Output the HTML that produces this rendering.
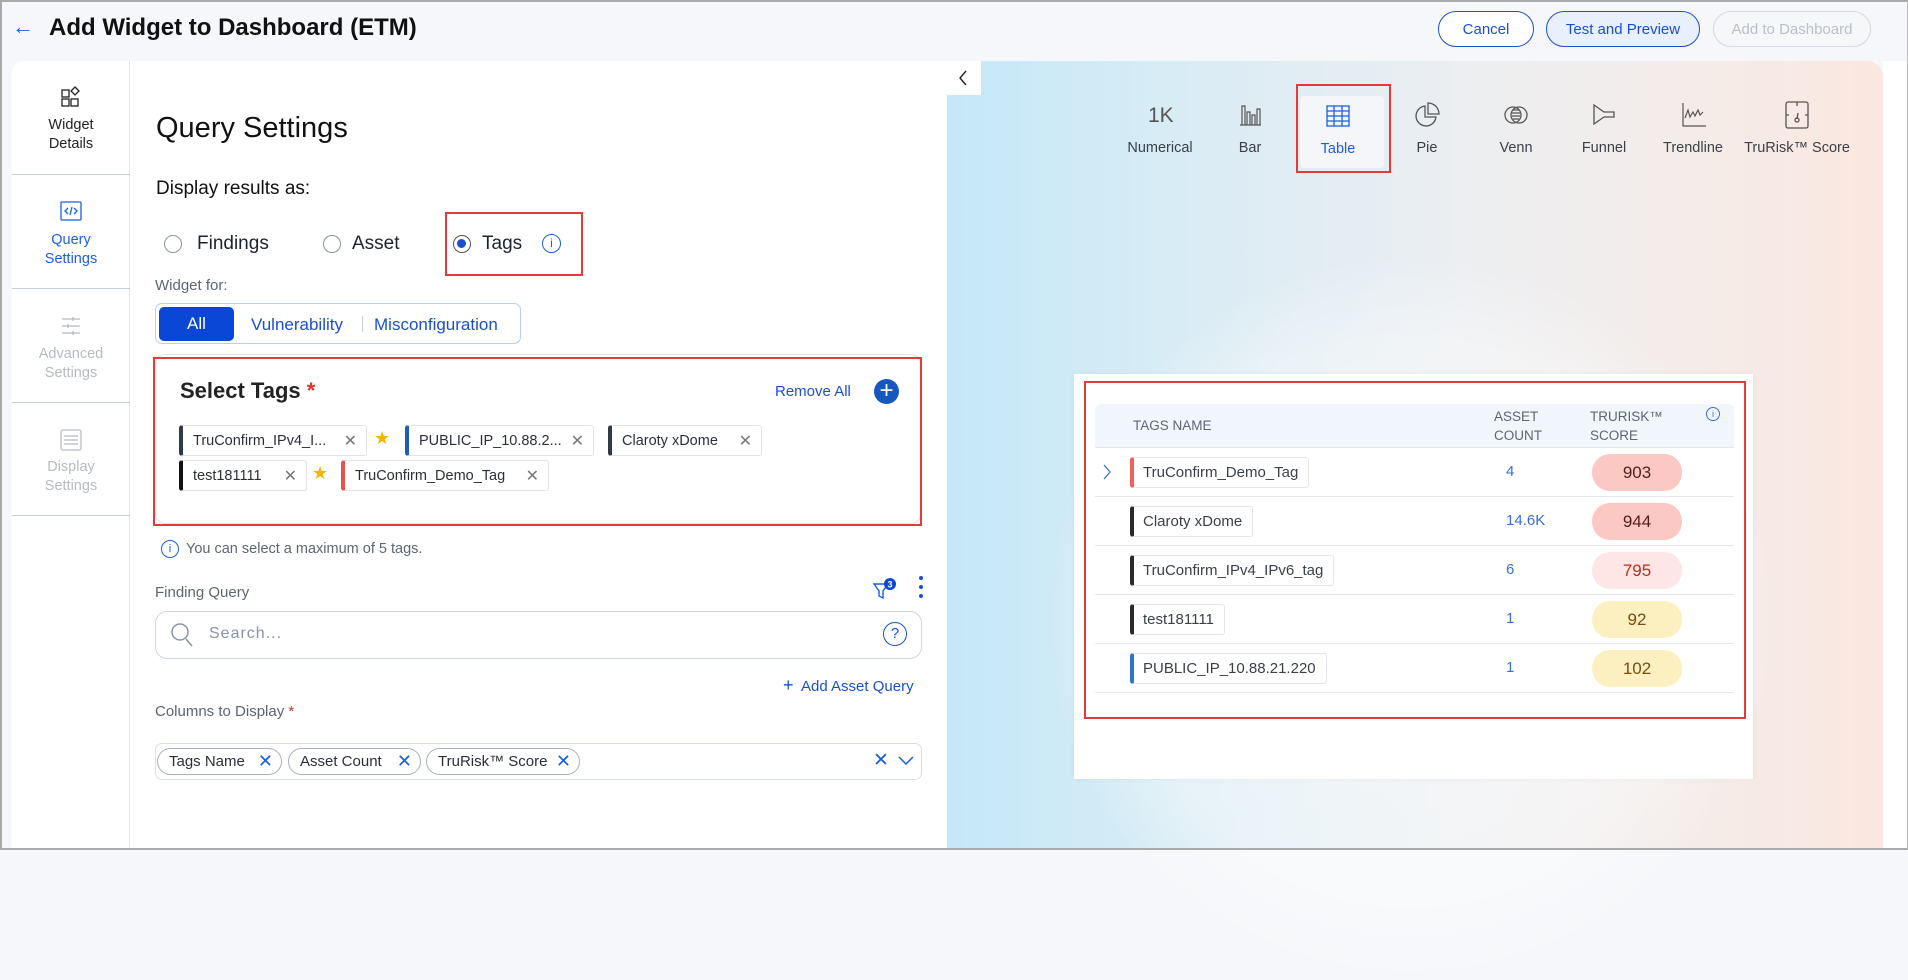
<!DOCTYPE html>
<html><head><meta charset="utf-8">
<style>
*{box-sizing:border-box;margin:0;padding:0}
body{width:1908px;height:850px;overflow:hidden;font-family:"Liberation Sans",sans-serif;background:#f5f7fa;position:relative;color:#1d2330}
.a{position:absolute}
.frame{position:absolute;left:0;top:0;width:1908px;height:850px;border:2px solid #a9a9a9;border-right:1px solid #bbb;border-bottom:2px solid #a9a9a9;pointer-events:none;z-index:9}
.btn{position:absolute;top:11px;height:36px;border-radius:18px;font-size:15px;display:flex;align-items:center;justify-content:center}
.side{position:absolute;left:12px;top:61px;width:118px;height:789px;background:#fff;border-right:1px solid #e1e4ea;border-top-left-radius:12px}
.si{position:absolute;left:0;width:118px;text-align:center;font-size:14.5px;line-height:19px}
.sd{position:absolute;left:0;width:118px;height:1px;background:#c8ced8}
.main{position:absolute;left:130px;top:61px;width:817px;height:789px;background:#fff}
.radio{position:absolute;width:18px;height:18px;border:1.5px solid #8a93a3;border-radius:50%}
.chip{position:absolute;height:31px;border:1px solid #e0e3e8;border-radius:3px;border-left:4px solid #333;font-size:14.5px;display:flex;align-items:center;padding-left:10px;color:#2b2f38;background:#fff}
.chip .x{position:absolute;right:9px;top:5px;color:#777;font-size:16px}
.star{position:absolute;color:#f5b400;font-size:18px}
.cc{position:absolute;top:748px;height:27px;border:1px solid #a7afbd;border-radius:14px;font-size:15px;display:flex;align-items:center;padding-left:11px;color:#2b2f38}
.cc b{font-weight:normal;color:#1b5fe0;font-size:18px;position:absolute;right:8px;top:2px}
.ct{position:absolute;text-align:center;font-size:14.5px;color:#3a3f48;width:100px}
.tr{position:absolute;left:1095px;width:639px;height:49px;border-bottom:1px solid #e4e7ec}
.tc{position:absolute;left:35px;top:9px;height:31px;border:1px solid #e2e5ea;border-left:4px solid #2a2a2a;border-radius:3px;padding:0 10px 0 9px;font-size:15px;line-height:29px;color:#3a3f48;background:#fff}
.cnt{position:absolute;left:411px;top:15px;color:#3b6fd8;font-size:15px}
.sc{position:absolute;left:497px;top:6px;width:90px;height:37px;border-radius:18px;text-align:center;line-height:37px;font-size:17px}
</style></head><body>
<div class="frame"></div>
<div class="a" style="left:12px;top:14px;font-size:22px;color:#1b5fe0">&#8592;</div>
<div class="a" style="left:49px;top:14px;font-size:24px;font-weight:bold;color:#111">Add Widget to Dashboard (ETM)</div>
<div class="btn" style="left:1438px;width:96px;border:1.5px solid #1b4fd0;color:#1b4fd0;background:#fff">Cancel</div>
<div class="btn" style="left:1546px;width:154px;border:1.5px solid #1b4fd0;color:#1b4fd0;background:#e8f0fd">Test and Preview</div>
<div class="btn" style="left:1713px;width:158px;border:1px solid #d5d9e0;color:#b9bec8;background:#f6f7f9">Add to Dashboard</div>

<div class="side">
 <svg class="a" style="left:47px;top:24px" width="24" height="24" viewBox="0 0 24 24" fill="none" stroke="#222" stroke-width="1.3"><rect x="3" y="5" width="7" height="7"/><rect x="3" y="14" width="7" height="7"/><rect x="12" y="14" width="7" height="7"/><path d="M16 2l4 4-4 4-4-4z"/></svg>
 <div class="si" style="top:55px;color:#222">Widget<br>Details</div>
 <div class="sd" style="top:113px"></div>
 <svg class="a" style="left:47px;top:139px" width="24" height="22" viewBox="0 0 24 22" fill="none" stroke="#1b5fe0" stroke-width="1.3"><rect x="2" y="2" width="20" height="18" rx="1"/><path d="M9 8l-3 3 3 3M15 8l3 3-3 3M13 7l-2 8"/></svg>
 <div class="si" style="top:170px;color:#1b5fe0">Query<br>Settings</div>
 <div class="sd" style="top:227px"></div>
 <svg class="a" style="left:47px;top:254px" width="24" height="22" viewBox="0 0 24 22" fill="none" stroke="#b5bac4" stroke-width="1.3"><path d="M3 4h18M3 11h18M3 18h18"/><path d="M14 2v4M9 9v4M14 16v4"/></svg>
 <div class="si" style="top:284px;color:#b5bac4">Advanced<br>Settings</div>
 <div class="sd" style="top:341px"></div>
 <svg class="a" style="left:47px;top:367px" width="24" height="24" viewBox="0 0 24 24" fill="none" stroke="#b5bac4" stroke-width="1.3"><rect x="2" y="2" width="20" height="20" rx="2"/><path d="M5 8h14M5 12h14M5 16h14"/></svg>
 <div class="si" style="top:397px;color:#b5bac4">Display<br>Settings</div>
 <div class="sd" style="top:454px"></div>
</div>

<div class="main"></div>
<div class="a" style="left:156px;top:112px;font-size:29px;color:#111">Query Settings</div>
<div class="a" style="left:156px;top:178px;font-size:19px;color:#111">Display results as:</div>
<div class="radio" style="left:164px;top:235px"></div>
<div class="a" style="left:197px;top:233px;font-size:19px">Findings</div>
<div class="radio" style="left:323px;top:235px"></div>
<div class="a" style="left:352px;top:233px;font-size:19px">Asset</div>
<div class="radio" style="left:453px;top:235px;border-color:#555"><div class="a" style="left:3px;top:3px;width:9px;height:9px;border-radius:50%;background:#1b4fd0"></div></div>
<div class="a" style="left:482px;top:233px;font-size:19px">Tags</div>
<div class="a" style="left:542px;top:234px;width:19px;height:19px;border:1.3px solid #1b5fe0;border-radius:50%;color:#1b5fe0;font-size:12px;text-align:center;line-height:17px">i</div>
<div class="a" style="left:445px;top:212px;width:138px;height:64px;border:2px solid #e53a3a"></div>
<div class="a" style="left:155px;top:277px;font-size:15px;color:#5d6574">Widget for:</div>
<div class="a" style="left:155px;top:303px;width:366px;height:41px;border:1px solid #b9cdf0;border-radius:7px"></div>
<div class="a" style="left:159px;top:307px;width:75px;height:34px;background:#0a47d6;border-radius:5px;color:#fff;font-size:17px;text-align:center;line-height:34px">All</div>
<div class="a" style="left:251px;top:315px;font-size:17px;color:#1b4fd0">Vulnerability</div>
<div class="a" style="left:362px;top:316px;width:1px;height:16px;background:#c5cbd6"></div>
<div class="a" style="left:374px;top:315px;font-size:17px;color:#1b4fd0">Misconfiguration</div>

<div class="a" style="left:155px;top:354px;width:766px;height:170px;border:1px solid #dfe3ea;border-radius:10px"></div>
<div class="a" style="left:153px;top:357px;width:769px;height:169px;border:2px solid #e53a3a"></div>
<div class="a" style="left:180px;top:378px;font-size:22px;font-weight:bold;color:#222">Select Tags <span style="color:#e0302a">*</span></div>
<div class="a" style="left:775px;top:383px;font-size:15px;color:#1b4fd0">Remove All</div>
<div class="a" style="left:874px;top:379px;width:25px;height:25px;border-radius:50%;background:#1558c0;color:#fff;font-size:24px;text-align:center;line-height:24px">+</div>
<div class="chip" style="left:179px;top:425px;width:188px;border-left-color:#2f3a45">TruConfirm_IPv4_I...<span class="x">✕</span></div>
<div class="star" style="left:374px;top:428px">★</div>
<div class="chip" style="left:405px;top:425px;width:189px;border-left-color:#1b5fb0">PUBLIC_IP_10.88.2...<span class="x">✕</span></div>
<div class="chip" style="left:608px;top:425px;width:154px;border-left-color:#2f3a45">Claroty xDome<span class="x">✕</span></div>
<div class="chip" style="left:179px;top:460px;width:128px;border-left-color:#111">test181111<span class="x">✕</span></div>
<div class="star" style="left:312px;top:463px">★</div>
<div class="chip" style="left:341px;top:460px;width:208px;border-left-color:#e85050">TruConfirm_Demo_Tag<span class="x">✕</span></div>

<div class="a" style="left:161px;top:540px;width:18px;height:18px;border:1.3px solid #1b5fe0;border-radius:50%;color:#1b5fe0;font-size:11px;text-align:center;line-height:16px">i</div>
<div class="a" style="left:186px;top:541px;font-size:14.5px;color:#5d6574">You can select a maximum of 5 tags.</div>
<div class="a" style="left:155px;top:584px;font-size:15px;color:#5d6574">Finding Query</div>
<svg class="a" style="left:872px;top:578px" width="26" height="24" viewBox="0 0 26 24"><path d="M2 6h14l-5 7v7l-4-2v-5z" fill="none" stroke="#1b5fe0" stroke-width="1.4"/><circle cx="18" cy="6" r="6" fill="#0a47d6"/><text x="18" y="9.5" font-size="9" fill="#fff" text-anchor="middle" font-family="Liberation Sans" font-weight="bold">3</text></svg>
<div class="a" style="left:919px;top:576px;width:4px;height:4px;border-radius:50%;background:#1b4fd0;box-shadow:0 9px 0 #1b4fd0,0 18px 0 #1b4fd0"></div>
<div class="a" style="left:155px;top:611px;width:767px;height:48px;border:1px solid #cfd5df;border-radius:12px"></div>
<svg class="a" style="left:170px;top:622px" width="24" height="26" viewBox="0 0 24 26" fill="none" stroke="#8a93a3" stroke-width="1.5"><circle cx="10" cy="10" r="8"/><path d="M16 17l6 7"/></svg>
<div class="a" style="left:209px;top:625px;font-size:16px;color:#8a93a3;letter-spacing:1px">Search...</div>
<div class="a" style="left:883px;top:622px;width:24px;height:24px;border:1.5px solid #1b4fd0;border-radius:50%;color:#1b4fd0;font-size:15px;text-align:center;line-height:21px">?</div>
<div class="a" style="left:783px;top:675px;font-size:15px;color:#1b4fd0"><span style="font-size:18px">+</span>&nbsp; Add Asset Query</div>
<div class="a" style="left:155px;top:703px;font-size:15px;color:#5d6574">Columns to Display <span style="color:#e0302a">*</span></div>
<div class="a" style="left:155px;top:743px;width:767px;height:37px;border:1px solid #d8def0;border-radius:7px"></div>
<div class="cc" style="left:157px;width:125px">Tags Name<b>✕</b></div>
<div class="cc" style="left:288px;width:133px">Asset Count<b>✕</b></div>
<div class="cc" style="left:426px;width:154px">TruRisk™ Score<b>✕</b></div>
<div class="a" style="left:873px;top:749px;font-size:19px;color:#1b5fe0">✕</div>
<svg class="a" style="left:897px;top:755px" width="18" height="12" viewBox="0 0 18 12"><path d="M2 2l7 7 7-7" fill="none" stroke="#1b5fe0" stroke-width="1.5"/></svg>

<div class="a" style="left:947px;top:61px;width:936px;height:789px;border-top-right-radius:16px;background:linear-gradient(90deg,#c4e8f8 0%,#d9ecf5 25%,#eceef1 55%,#f4ece9 80%,#fbe7df 100%)"></div>
<div class="a" style="left:1050px;top:260px;width:720px;height:720px;border-radius:50%;background:radial-gradient(circle,rgba(255,255,255,.55) 0%,rgba(255,255,255,.35) 55%,rgba(255,255,255,0) 72%)"></div>
<div class="a" style="left:1883px;top:61px;width:25px;height:789px;background:#fff"></div>
<div class="a" style="left:947px;top:61px;width:34px;height:34px;background:#fff"></div>
<svg class="a" style="left:957px;top:69px" width="12" height="18" viewBox="0 0 12 18"><path d="M9 2L3 9l6 7" fill="none" stroke="#222" stroke-width="1.4"/></svg>

<div class="a" style="left:1300px;top:96px;width:84px;height:72px;background:#f4f6fa;border-radius:4px"></div>
<div class="a" style="left:1296px;top:84px;width:95px;height:89px;border:2px solid #e53a3a"></div>
<div class="a" style="left:1148px;top:104px;font-size:21px;color:#555">1K</div>
<svg class="a" style="left:1238px;top:103px" width="24" height="24" viewBox="0 0 24 24" fill="none" stroke="#555" stroke-width="1.2"><path d="M2 22h21M4 22V3h3v19M9 22V9h3v13M14 22V12h3v10M19 22V6h3v16"/></svg>
<svg class="a" style="left:1326px;top:105px" width="24" height="22" viewBox="0 0 24 22" fill="none" stroke="#1b5fe0" stroke-width="1.3"><rect x="1" y="1" width="22" height="20"/><path d="M1 6h22M1 11h22M1 16h22M8 1v20M16 1v20"/></svg>
<svg class="a" style="left:1414px;top:102px" width="26" height="26" viewBox="0 0 26 26" fill="none" stroke="#555" stroke-width="1.3"><path d="M11 4a10 10 0 1 0 11 11H11z"/><path d="M14 1v11h11A11 11 0 0 0 14 1z"/></svg>
<svg class="a" style="left:1503px;top:104px" width="26" height="22" viewBox="0 0 26 22" fill="none" stroke="#555" stroke-width="1.3"><circle cx="10" cy="11" r="8"/><circle cx="16" cy="11" r="8"/><path d="M10 6h6M9 9h8M9 12h8M10 15h6"/></svg>
<svg class="a" style="left:1592px;top:103px" width="24" height="24" viewBox="0 0 24 24" fill="none" stroke="#555" stroke-width="1.3"><path d="M2 2l10 7h10v5H12L2 21z"/></svg>
<svg class="a" style="left:1681px;top:102px" width="26" height="26" viewBox="0 0 26 26" fill="none" stroke="#555" stroke-width="1.2"><path d="M2 1v23h23"/><path d="M4 16l3-8 2 7 3-5 2 4 3-6 2 5 3-3"/></svg>
<svg class="a" style="left:1785px;top:101px" width="24" height="28" viewBox="0 0 24 28" fill="none" stroke="#555" stroke-width="1.3"><rect x="1" y="1" width="22" height="26" rx="2"/><path d="M12 1v4M1 14h3M20 14h3M12 18l1-6"/><circle cx="12" cy="19" r="2"/></svg>
<div class="ct" style="left:1110px;top:140px">Numerical</div>
<div class="ct" style="left:1200px;top:140px">Bar</div>
<div class="ct" style="left:1288px;top:141px;color:#1b5fe0">Table</div>
<div class="ct" style="left:1377px;top:140px">Pie</div>
<div class="ct" style="left:1466px;top:140px">Venn</div>
<div class="ct" style="left:1554px;top:140px">Funnel</div>
<div class="ct" style="left:1643px;top:140px">Trendline</div>
<div class="ct" style="left:1737px;top:140px;width:120px">TruRisk™ Score</div>

<div class="a" style="left:1074px;top:374px;width:679px;height:405px;background:#fff;box-shadow:0 0 6px rgba(0,0,0,.05)"></div>
<div class="a" style="left:1084px;top:381px;width:662px;height:338px;border:2px solid #e53a3a"></div>
<div class="a" style="left:1095px;top:404px;width:639px;height:44px;background:#f1f6fd;border-radius:6px 6px 0 0;border-bottom:1px solid #e2e6ec"></div>
<div class="a" style="left:1133px;top:418px;font-size:13.5px;color:#5d6574">TAGS NAME</div>
<div class="a" style="left:1494px;top:407px;font-size:13.5px;color:#5d6574;line-height:19px">ASSET<br>COUNT</div>
<div class="a" style="left:1590px;top:407px;font-size:13.5px;color:#5d6574;line-height:19px">TRURISK™<br>SCORE</div>
<div class="a" style="left:1706px;top:407px;width:14px;height:14px;border:1px solid #3b6fd8;border-radius:50%;color:#3b6fd8;font-size:9px;text-align:center;line-height:12px">i</div>

<div class="tr" style="top:448px"><svg class="a" style="left:7px;top:16px" width="10" height="16" viewBox="0 0 10 16"><path d="M2 1l6 7-6 7" fill="none" stroke="#3b6fd8" stroke-width="1.3"/></svg><div class="tc" style="border-left-color:#ef6060">TruConfirm_Demo_Tag</div><div class="cnt">4</div><div class="sc" style="background:#fcc8c3;color:#5a1d16">903</div></div>
<div class="tr" style="top:497px"><div class="tc">Claroty xDome</div><div class="cnt">14.6K</div><div class="sc" style="background:#fcc8c3;color:#5a1d16">944</div></div>
<div class="tr" style="top:546px"><div class="tc">TruConfirm_IPv4_IPv6_tag</div><div class="cnt">6</div><div class="sc" style="background:#fde6e5;color:#b8301e">795</div></div>
<div class="tr" style="top:595px"><div class="tc">test181111</div><div class="cnt">1</div><div class="sc" style="background:#fdf0c0;color:#7a4a12">92</div></div>
<div class="tr" style="top:644px"><div class="tc" style="border-left-color:#2f72c8">PUBLIC_IP_10.88.21.220</div><div class="cnt">1</div><div class="sc" style="background:#fdf0c0;color:#7a4a12">102</div></div>
</body></html>
